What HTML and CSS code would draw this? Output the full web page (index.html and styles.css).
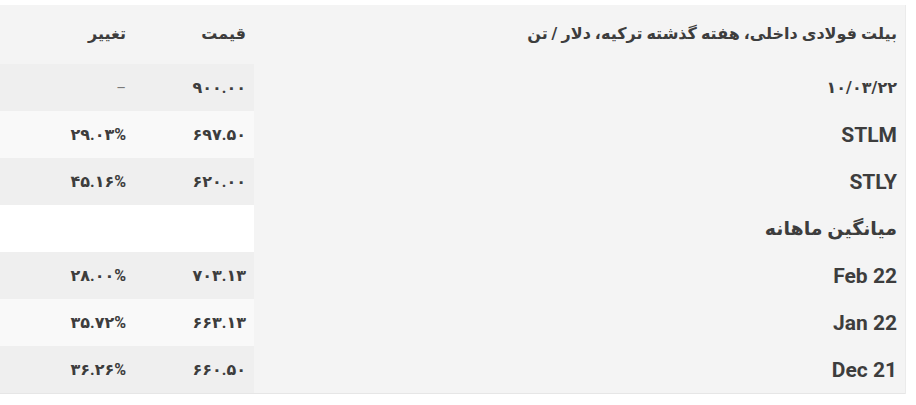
FILE: index.html
```html
<!DOCTYPE html>
<html lang="fa" dir="rtl">
<head>
<meta charset="utf-8">
<link rel="stylesheet" href="styles.css">
</head>
<body>
<table class="price-table">
  <thead>
    <tr>
      <th class="col-name">بیلت فولادی داخلی، هفته گذشته ترکیه، دلار / تن</th>
      <th class="col-price">قیمت</th>
      <th class="col-change">تغییر</th>
    </tr>
  </thead>
  <tbody>
    <tr class="odd">
      <td class="col-name">۱۰/۰۳/۲۲</td>
      <td class="col-price num">۹۰۰.۰۰</td>
      <td class="col-change"><span class="dash">–</span></td>
    </tr>
    <tr class="even">
      <td class="col-name latin">STLM</td>
      <td class="col-price num">۶۹۷.۵۰</td>
      <td class="col-change num">۲۹.۰۳%</td>
    </tr>
    <tr class="odd">
      <td class="col-name latin">STLY</td>
      <td class="col-price num">۶۲۰.۰۰</td>
      <td class="col-change num">۴۵.۱۶%</td>
    </tr>
    <tr class="blank">
      <td class="col-name label">میانگین ماهانه</td>
      <td class="col-price"></td>
      <td class="col-change"></td>
    </tr>
    <tr class="odd">
      <td class="col-name latin">Feb 22</td>
      <td class="col-price num">۷۰۳.۱۳</td>
      <td class="col-change num">۲۸.۰۰%</td>
    </tr>
    <tr class="even">
      <td class="col-name latin">Jan 22</td>
      <td class="col-price num">۶۶۳.۱۳</td>
      <td class="col-change num">۳۵.۷۲%</td>
    </tr>
    <tr class="odd">
      <td class="col-name latin">Dec 21</td>
      <td class="col-price num">۶۶۰.۵۰</td>
      <td class="col-change num">۳۶.۲۶%</td>
    </tr>
  </tbody>
</table>
</body>
</html>
```
FILE: styles.css
```css
html, body {
  margin: 0;
  padding: 0;
  background: #ffffff;
}

body {
  direction: rtl;
  font-family: Roboto, "DejaVu Sans", sans-serif;
  color: #3d3d3d;
}

.price-table {
  width: 906px;
  margin: 5px auto 0 0;
  border-collapse: collapse;
  border-bottom: 1px solid #e6e6e6;
  table-layout: fixed;
}

.price-table th,
.price-table td {
  text-align: right;
  padding: 0 8px;
  font-weight: 700;
  vertical-align: middle;
}

.price-table th {
  height: 56px;
  padding-bottom: 3px;
  background: #f4f4f4;
  font-size: 16px;
}

.price-table td {
  height: 47px;
  font-size: 14px;
}

.col-name {
  width: 635px;
  border-right: 1px solid #ebebeb;
}

.col-price {
  width: 104px;
}

.col-change {
  width: 118px;
}

tr.odd td { background: #efefef; }
tr.even td { background: #f9f9f9; }
tr.blank td { background: #ffffff; }

.price-table td.col-name {
  background: #f4f4f4;
  font-size: 16px;
}

.price-table td.latin {
  font-size: 21px;
}

.price-table td.label {
  font-size: 19px;
}

.price-table td.num {
  font-size: 16px;
  letter-spacing: -0.3px;
}

.dash {
  color: #7a7a7a;
  font-weight: 400;
  font-size: 15px;
}
```
